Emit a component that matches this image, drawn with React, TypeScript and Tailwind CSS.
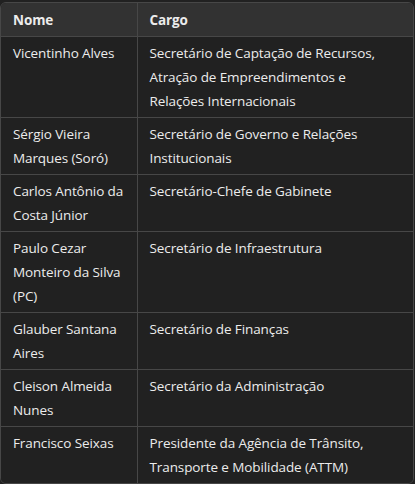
const rows = [
  { name: "Vicentinho Alves", role: "Secretário de Captação de Recursos, Atração de Empreendimentos e Relações Internacionais" },
  { name: "Sérgio Vieira Marques (Soró)", role: "Secretário de Governo e Relações Institucionais" },
  { name: "Carlos Antônio da Costa Júnior", role: "Secretário-Chefe de Gabinete" },
  { name: "Paulo Cezar Monteiro da Silva (PC)", role: "Secretário de Infraestrutura" },
  { name: "Glauber Santana Aires", role: "Secretário de Finanças" },
  { name: "Cleison Almeida Nunes", role: "Secretário da Administração" },
  { name: "Francisco Seixas", role: "Presidente da Agência de Trânsito, Transporte e Mobilidade (ATTM)" },
];

export default function App() {
  return (
    <div className="min-h-screen w-full bg-[#212121] pt-[2px] font-['Open_Sans',sans-serif] text-[13.5px] tracking-[-0.1px] text-[#ececec]">
      <div className="w-[414px] overflow-hidden rounded-[6px] border border-[#474747]">
        <table className="w-full border-collapse table-fixed">
          <thead>
            <tr className="bg-[#323232]">
              <th className="w-[136px] border-r border-[#474747] px-3 pt-[5px] pb-[4px] text-left font-bold leading-6">Nome</th>
              <th className="px-3 pt-[5px] pb-[4px] text-left font-bold leading-6">Cargo</th>
            </tr>
          </thead>
          <tbody className="bg-[#212121]">
            {rows.map((r) => (
              <tr key={r.name} className="border-t border-[#474747] align-top">
                <td className="border-r border-[#474747] px-3 py-1 leading-6">{r.name}</td>
                <td className="px-3 py-1 leading-6">{r.role}</td>
              </tr>
            ))}
          </tbody>
        </table>
      </div>
    </div>
  );
}
